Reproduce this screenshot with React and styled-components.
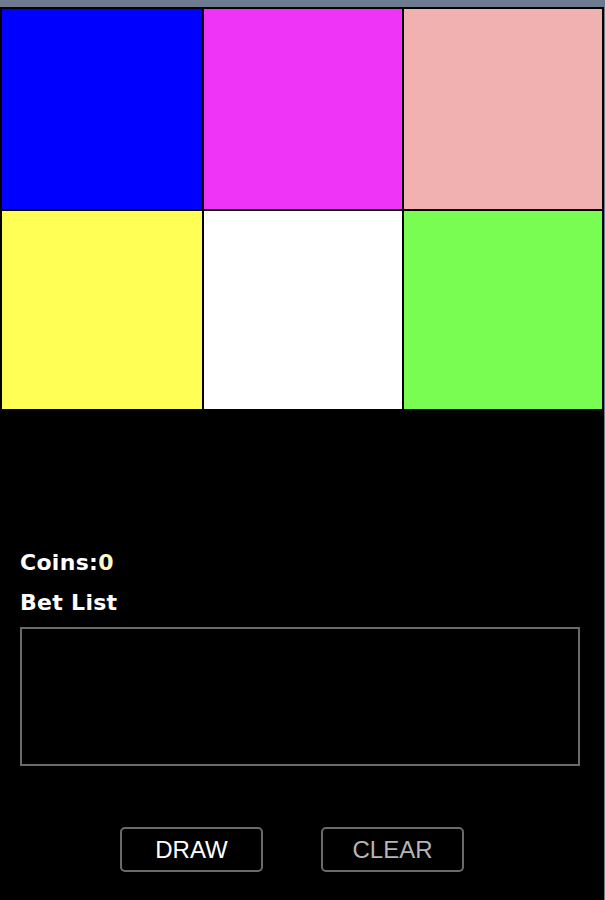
import React, { useState } from "react";
import styled, { createGlobalStyle } from "styled-components";

const GlobalStyle = createGlobalStyle`
  html, body {
    margin: 0;
    padding: 0;
    background: #6c7b8f;
  }
`;

const Page = styled.div`
  margin-top: 7px;
  width: 604px;
  min-height: 893px;
  background: #000;
  display: flex;
  flex-direction: column;
`;

const Board = styled.div`
  display: grid;
  grid-template-columns: 200px 198px 198px;
  grid-template-rows: 200px 198px;
  gap: 2px;
  padding: 2px;
  background: #000;
`;

const Cell = styled.div`
  background: ${(p) => p.$color};
  cursor: pointer;
`;

const Info = styled.div`
  padding: 132px 24px 0 20px;
  font-family: "DejaVu Sans", "Noto Sans", sans-serif;
  font-weight: bold;
  font-size: 22px;
  letter-spacing: 0.3px;
  color: #fff;
`;

const Line = styled.div`
  line-height: 40px;
  height: 40px;
`;

const Amount = styled.span`
  color: #fbfbc6;
`;

const BetBox = styled.div`
  margin-top: 4px;
  height: 135px;
  border: 2px solid #6a6a6a;
`;

const Actions = styled.div`
  display: flex;
  justify-content: center;
  gap: 58px;
  padding-right: 20px;
  margin-top: 61px;
`;

const Button = styled.button`
  box-sizing: border-box;
  width: 143px;
  height: 45px;
  background: #000;
  border: 2px solid #6a6a6a;
  border-radius: 5px;
  font-family: "Liberation Sans", Arial, sans-serif;
  font-size: 24px;
  color: ${(p) => (p.$dim ? "#b5b5b5" : "#fff")};
  padding: 0;
  cursor: pointer;
`;

const colors = ["#0000ff", "#ef33f7", "#f2b1b1", "#ffff55", "#ffffff", "#79fd52"];

export default function App() {
  const [coins] = useState(0);

  return (
    <>
      <GlobalStyle />
      <Page>
        <Board>
          {colors.map((c) => (
            <Cell key={c} $color={c} />
          ))}
        </Board>
        <Info>
          <Line>
            Coins:<Amount>{coins}</Amount>
          </Line>
          <Line>Bet List</Line>
          <BetBox />
        </Info>
        <Actions>
          <Button>DRAW</Button>
          <Button $dim>CLEAR</Button>
        </Actions>
      </Page>
    </>
  );
}
